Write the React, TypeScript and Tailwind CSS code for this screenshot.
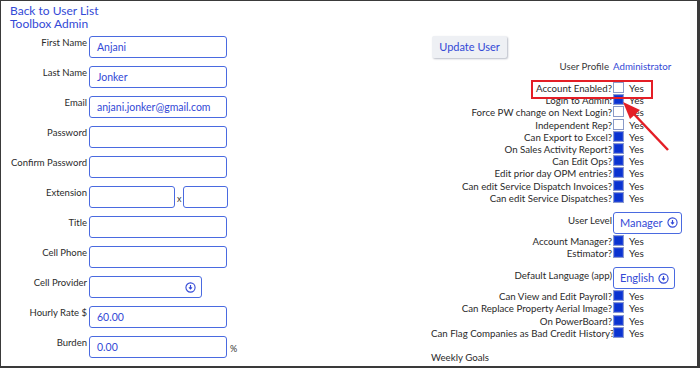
import React from 'react';

const font = "font-['Lato','Noto_Sans',sans-serif]";

interface FieldRowProps {
  label: string;
  children: React.ReactNode;
}

const FieldRow: React.FC<FieldRowProps> = ({ label, children }) => (
  <div className="flex h-[30px] items-start">
    <div className="w-[86px] whitespace-nowrap pt-[1px] text-right text-[9.5px] leading-[12px] text-[#2a2a2a]">
      {label}
    </div>
    <div className="ml-[2px] flex items-start">{children}</div>
  </div>
);

const TextBox: React.FC<{ value?: string; width?: string }> = ({ value = '', width = 'w-[138px]' }) => (
  <div
    className={`${width} h-[22px] rounded-[3px] border border-[#4a6ae0] px-[7px] text-[10.5px] leading-[21px] text-[#3349d6]`}
  >
    {value}
  </div>
);

const CircleDown: React.FC = () => (
  <svg width="11" height="11" viewBox="0 0 12 12" fill="none">
    <circle cx="6" cy="6" r="5" stroke="#3349d6" strokeWidth="1.2" />
    <path d="M6 3.3V7.6" stroke="#3349d6" strokeWidth="1.3" />
    <path d="M4.3 6.1L6 8.1L7.7 6.1Z" fill="#3349d6" stroke="#3349d6" strokeWidth="0.6" />
  </svg>
);

const CheckBox: React.FC<{ checked: boolean }> = ({ checked }) =>
  checked ? (
    <span className="block h-[11px] w-[11px] border border-[#8a9ad0] bg-[#0a34d0] shadow-[inset_0_0_0_1px_#2446d8]" />
  ) : (
    <span className="block h-[11px] w-[11px] border border-[#8a9ac8] bg-white" />
  );

const CheckRow: React.FC<{ label: string; checked: boolean }> = ({ label, checked }) => (
  <div className="flex h-[12.2px] text-[9.7px] leading-[12.2px] text-[#2a2a2a]">
    <div className="w-[181px] whitespace-nowrap text-right">{label}</div>
    <div className="ml-[1px]">
      <CheckBox checked={checked} />
    </div>
    <span className="ml-[5px] text-[10px]">Yes</span>
  </div>
);

const SelectRow: React.FC<{ label: string; value: string; width: string }> = ({ label, value, width }) => (
  <div className="mb-[1px] mt-[8px] flex items-start text-[9.7px] text-[#2a2a2a]">
    <div className="w-[181px] whitespace-nowrap pt-[2px] text-right leading-[12px]">{label}</div>
    <div
      className={`ml-[1px] flex h-[22px] ${width} items-center gap-[4px] rounded-[3px] border border-[#4a6ae0] pl-[6px] text-[11px] text-[#3349d6]`}
    >
      <span>{value}</span>
      <CircleDown />
    </div>
  </div>
);

const topChecks: [string, boolean][] = [
  ['Account Enabled?', false],
  ['Login to Admin:', true],
  ['Force PW change on Next Login?', false],
  ['Independent Rep?', false],
  ['Can Export to Excel?', true],
  ['On Sales Activity Report?', true],
  ['Can Edit Ops?', true],
  ['Edit prior day OPM entries?', true],
  ['Can edit Service Dispatch Invoices?', true],
  ['Can edit Service Dispatches?', true],
];

const midChecks: [string, boolean][] = [
  ['Account Manager?', true],
  ['Estimator?', true],
];

const lowChecks: [string, boolean][] = [
  ['Can View and Edit Payroll?', true],
  ['Can Replace Property Aerial Image?', true],
  ['On PowerBoard?', true],
  ['Can Flag Companies as Bad Credit History?', true],
];

export default function App() {
  return (
    <div
      className={`${font} relative h-[368px] w-[700px] overflow-hidden border-b-2 border-l border-r-[3px] border-t border-[#3a3a3a] bg-white`}
    >
      {/* top links */}
      <div className="pl-[9px] pt-[3px] text-[12px] leading-[13px] text-[#3349d6]">
        <div>Back to User List</div>
        <div>Toolbox Admin</div>
      </div>

      <div className="mt-[6px] flex">
        {/* left form */}
        <div className="w-[430px]">
          <FieldRow label="First Name">
            <TextBox value="Anjani" />
          </FieldRow>
          <FieldRow label="Last Name">
            <TextBox value="Jonker" />
          </FieldRow>
          <FieldRow label="Email">
            <TextBox value="anjani.jonker@gmail.com" />
          </FieldRow>
          <FieldRow label="Password">
            <TextBox />
          </FieldRow>
          <FieldRow label="Confirm Password">
            <TextBox />
          </FieldRow>
          <FieldRow label="Extension">
            <TextBox width="w-[86px]" />
            <span className="ml-[2px] mr-[2px] pt-[8px] text-[9px] leading-[10px] text-[#333]">x</span>
            <TextBox width="w-[45px]" />
          </FieldRow>
          <FieldRow label="Title">
            <TextBox />
          </FieldRow>
          <FieldRow label="Cell Phone">
            <TextBox />
          </FieldRow>
          <FieldRow label="Cell Provider">
            <div className="flex h-[22px] w-[113px] items-center justify-end rounded-[3px] border border-[#4a6ae0] pr-[5px]">
              <CircleDown />
            </div>
          </FieldRow>
          <FieldRow label="Hourly Rate $">
            <TextBox value="60.00" />
          </FieldRow>
          <FieldRow label="Burden">
            <TextBox value="0.00" />
            <span className="ml-[3px] pt-[7px] text-[9px] leading-[12px] text-[#333]">%</span>
          </FieldRow>
        </div>

        {/* right panel */}
        <div className="flex-1">
          <button className="ml-[1px] block h-[22px] w-[75px] rounded-[2px] bg-[#eef0f4] text-[11px] text-[#3349d6] shadow-[1px_1px_2px_#b8bcc6]">
            Update User
          </button>
          <div className="mt-[2px] flex text-[9.7px] leading-[13px]">
            <div className="w-[181px] pr-[3px] text-right text-[#3a3a3a]">User Profile</div>
            <span className="ml-[1px] text-[#3349d6]">Administrator</span>
          </div>
          <div className="h-[9px]" />
          {topChecks.map(([l, c]) => (
            <CheckRow key={l} label={l} checked={c} />
          ))}
          <SelectRow label="User Level" value="Manager" width="w-[69px]" />
          {midChecks.map(([l, c]) => (
            <CheckRow key={l} label={l} checked={c} />
          ))}
          <SelectRow label="Default Language (app)" value="English" width="w-[62px]" />
          {lowChecks.map(([l, c]) => (
            <CheckRow key={l} label={l} checked={c} />
          ))}
          <div className="mt-[12px] text-[9.7px] leading-[13px] text-[#2a2a2a]">Weekly Goals</div>
        </div>
      </div>

      {/* red annotation */}
      <svg className="pointer-events-none absolute left-[-1px] top-[-1px]" width="700" height="368">
        <rect x="532" y="81" width="120" height="17" fill="none" stroke="#e41e26" strokeWidth="2" />
        <line x1="668" y1="150" x2="632" y2="112" stroke="#e41e26" strokeWidth="2.5" />
        <polygon points="623,102 640,110 630,119" fill="#e41e26" />
      </svg>
    </div>
  );
}
